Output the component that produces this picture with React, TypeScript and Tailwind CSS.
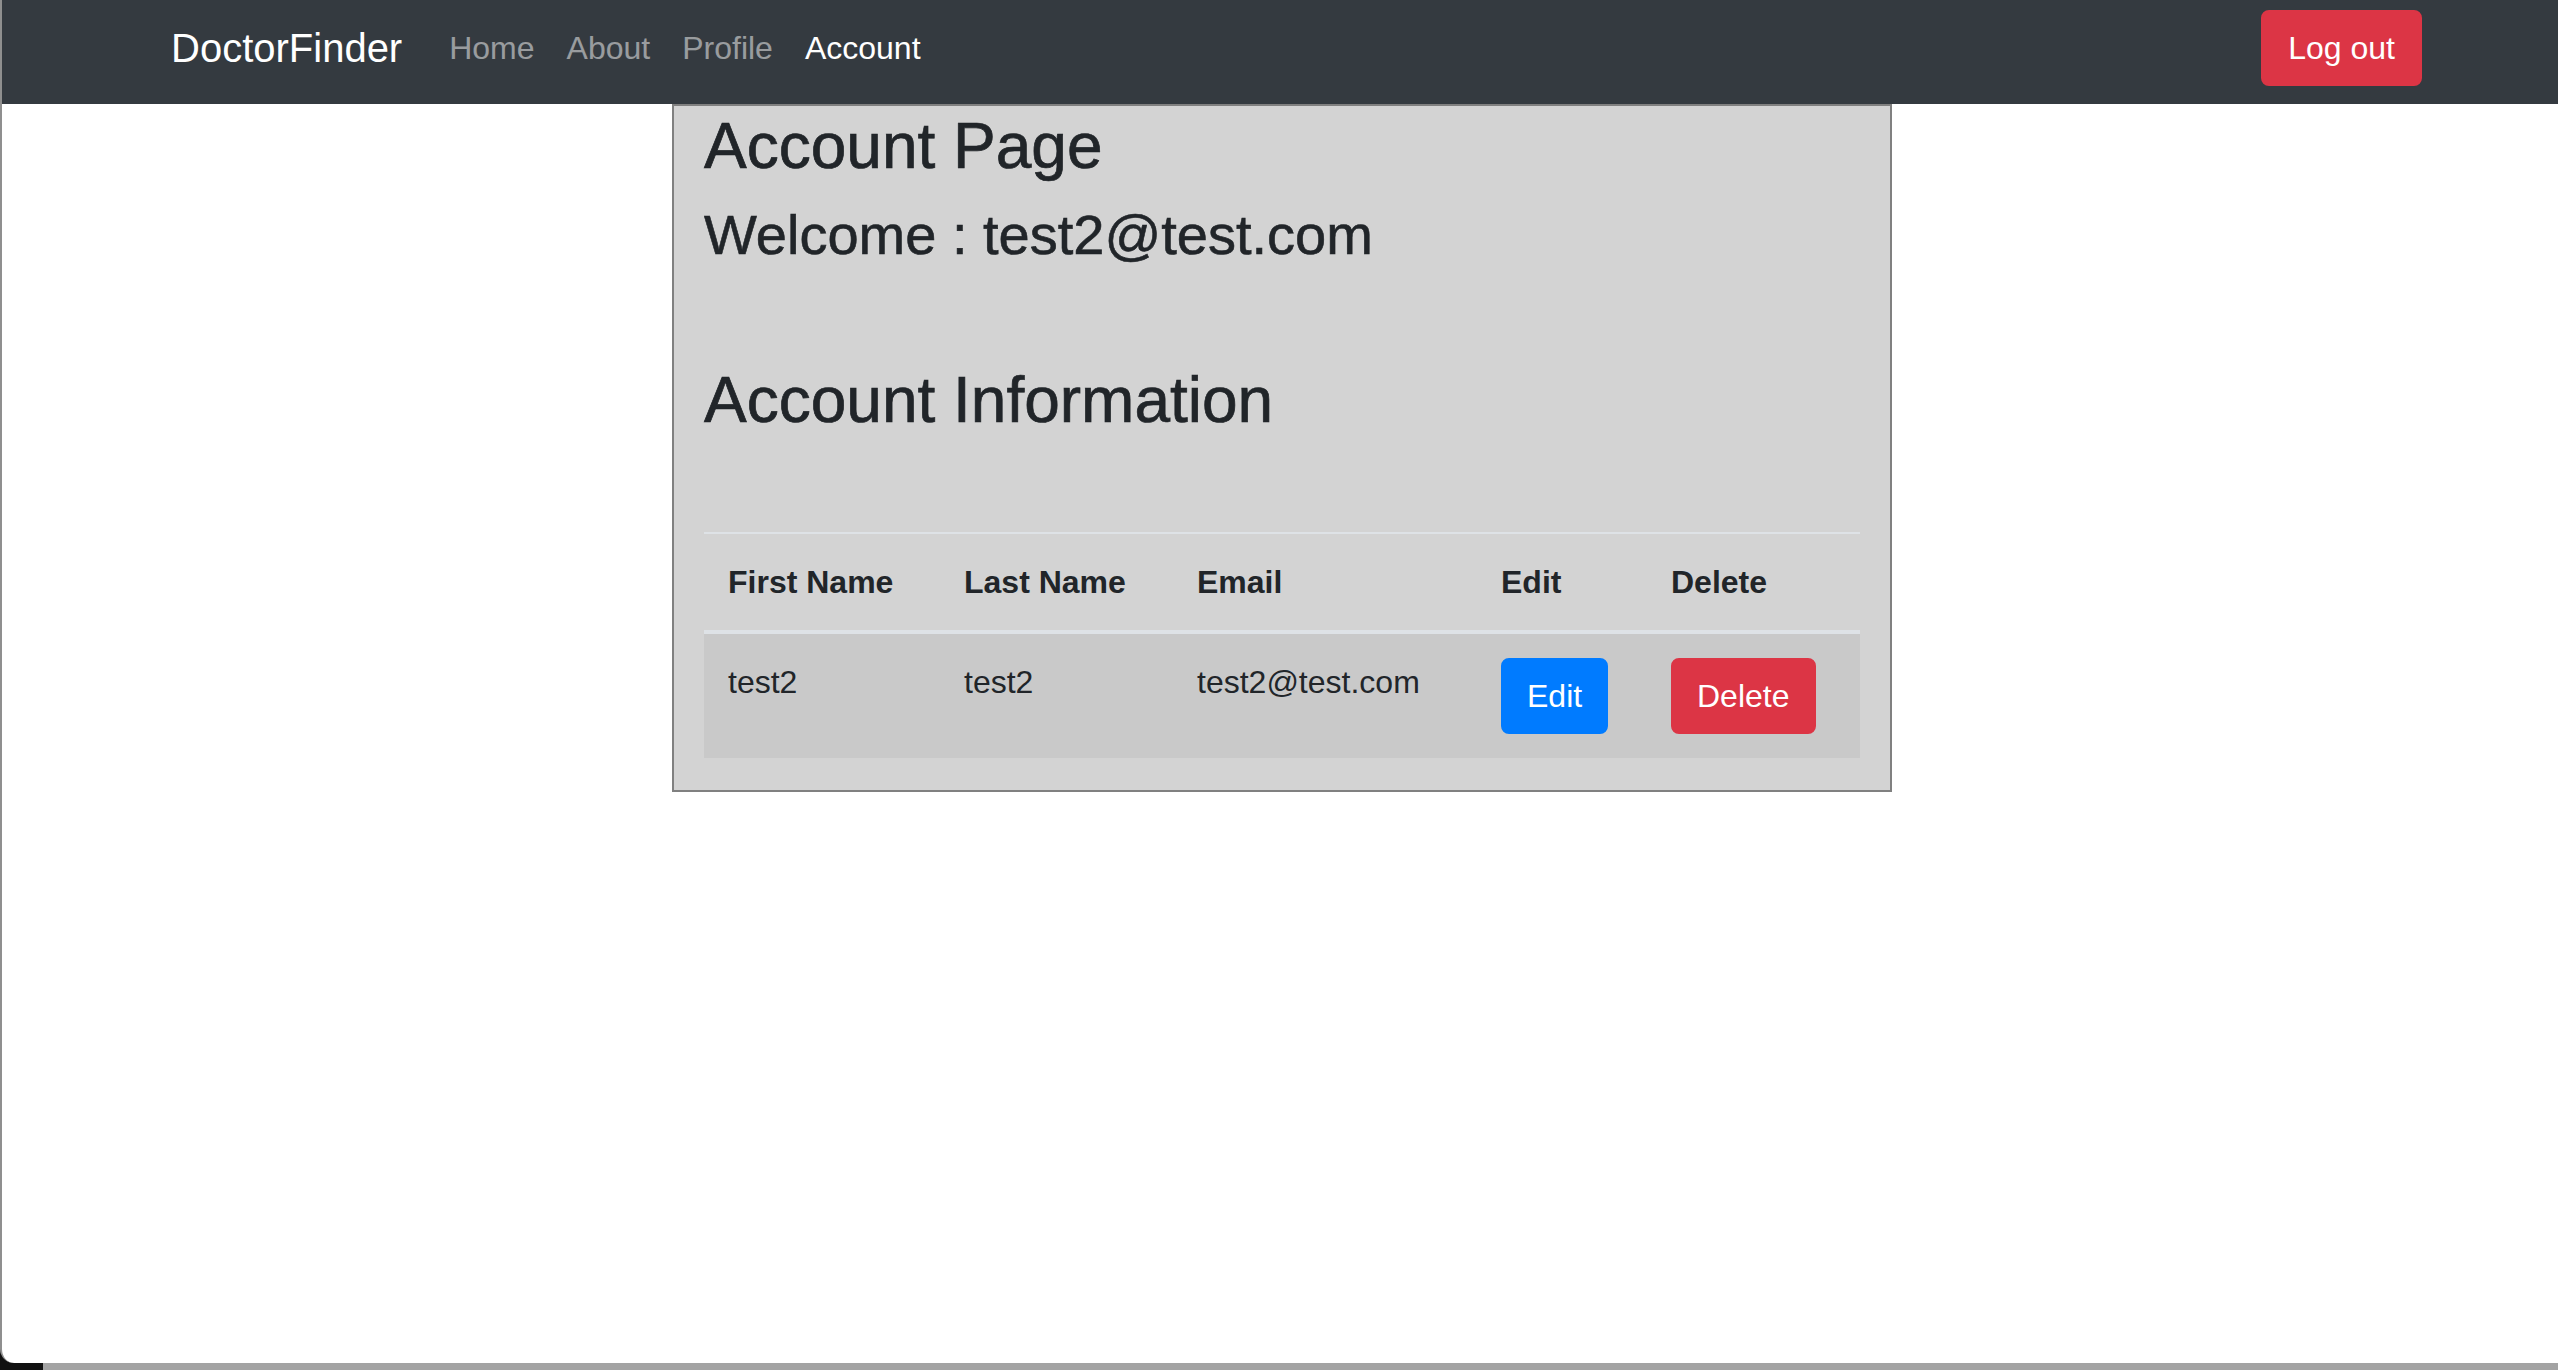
const FONT = { fontFamily: '"Liberation Sans", Arial, sans-serif' };

function NavBar() {
  return (
    <nav className="flex h-[104px] items-center bg-[#343a40] pb-[8px] pl-[169px] pr-[136px]">
      <span className="mr-[31px] text-[40px] leading-[60px] text-white">DoctorFinder</span>
      <div className="flex items-center text-[32px] leading-[48px]">
        <a className="px-[16px] text-white/50">Home</a>
        <a className="px-[16px] text-white/50">About</a>
        <a className="px-[16px] text-white/50">Profile</a>
        <a className="px-[16px] text-white">Account</a>
      </div>
      <button className="ml-auto rounded-[8px] border-2 border-[#dc3545] bg-[#dc3545] px-[25px] py-[12px] text-[32px] leading-[48px] text-white">
        Log out
      </button>
    </nav>
  );
}

const cols = 'grid grid-cols-[236px_233px_304px_170px_213px]';

function AccountTable() {
  return (
    <div className="mt-[93px] mb-[32px] border-t-2 border-[#dee2e6] text-[32px] leading-[48px]">
      <div className={`${cols} border-b-4 border-[#dee2e6] font-bold`}>
        <div className="p-[24px]">First Name</div>
        <div className="p-[24px]">Last Name</div>
        <div className="p-[24px]">Email</div>
        <div className="p-[24px]">Edit</div>
        <div className="p-[24px]">Delete</div>
      </div>
      <div className={`${cols} items-start bg-[#c9c9c9]`}>
        <div className="p-[24px]">test2</div>
        <div className="p-[24px]">test2</div>
        <div className="p-[24px]">test2@test.com</div>
        <div className="p-[24px]">
          <button className="rounded-[8px] border-2 border-[#007bff] bg-[#007bff] px-[24px] py-[12px] text-white">
            Edit
          </button>
        </div>
        <div className="p-[24px]">
          <button className="rounded-[8px] border-2 border-[#dc3545] bg-[#dc3545] px-[24px] py-[12px] text-white">
            Delete
          </button>
        </div>
      </div>
    </div>
  );
}

export default function App() {
  return (
    <div
      className="h-[1370px] w-full overflow-hidden bg-[linear-gradient(to_right,#111111_43px,#a3a3a3_43px)]"
      style={FONT}
    >
      <div className="h-[1363px] overflow-hidden rounded-bl-[14px] border-l-2 border-[#8f8f8f] bg-white">
        <NavBar />
        <div className="pl-[4px]">
          <div className="mx-auto w-[1220px] border-2 border-[#808080] bg-[#d3d3d3] px-[30px] pt-[2px] text-[#212529]">
            <h2 className="text-[64px] leading-[76.8px] [-webkit-text-stroke:0.7px_#212529]">Account Page</h2>
            <h3 className="mt-[16px] text-[56px] leading-[67.2px] [-webkit-text-stroke:0.6px_#212529]">
              Welcome : test2@test.com
            </h3>
            <h2 className="mt-[94px] text-[64px] leading-[76.8px] [-webkit-text-stroke:0.7px_#212529]">
              Account Information
            </h2>
            <AccountTable />
          </div>
        </div>
      </div>
    </div>
  );
}
